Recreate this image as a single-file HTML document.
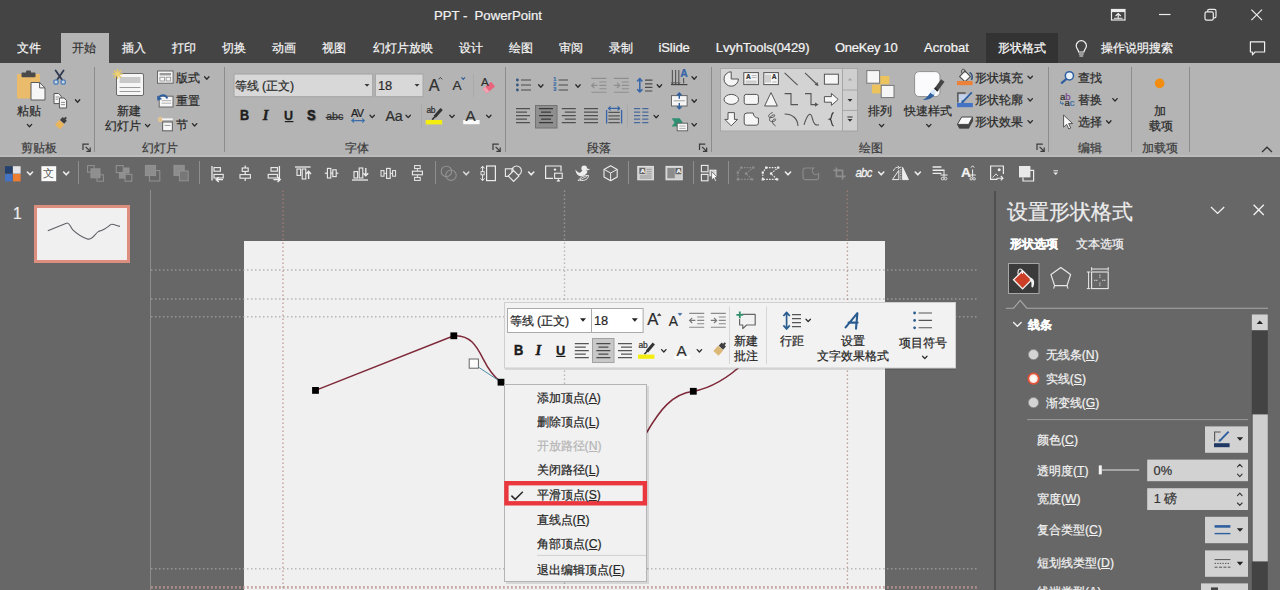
<!DOCTYPE html>
<html lang="zh"><head><meta charset="utf-8"><title>PPT - PowerPoint</title>
<style>
*{box-sizing:border-box;margin:0;padding:0}
html,body{width:1280px;height:590px;overflow:hidden;background:#676767;font-family:"Liberation Sans",sans-serif;font-size:12px;color:#262626}
.a{position:absolute}
.t{position:absolute;white-space:nowrap;line-height:1;-webkit-text-stroke:0.22px currentColor}
svg{position:absolute;left:0;top:0}
u{text-decoration:underline;text-underline-offset:1px}
</style></head>
<body>
<div class="a " style="left:0px;top:0px;width:1280px;height:62.5px;background:#444"></div>
<div class="a " style="left:60.8px;top:33px;width:48.7px;height:30px;background:#b4b4b4"></div>
<div class="a " style="left:986px;top:33px;width:72.4px;height:29.5px;background:#333"></div>
<div class="a " style="left:0px;top:62.5px;width:1280px;height:94.2px;background:#b4b4b4"></div>
<div class="a " style="left:0px;top:154.8px;width:1280px;height:1.9px;background:#bcbcbc"></div>
<div class="a " style="left:94px;top:67px;width:1px;height:85px;background:#8c8c8c"></div>
<div class="a " style="left:224px;top:67px;width:1px;height:85px;background:#8c8c8c"></div>
<div class="a " style="left:504.5px;top:67px;width:1px;height:85px;background:#8c8c8c"></div>
<div class="a " style="left:711px;top:67px;width:1px;height:85px;background:#8c8c8c"></div>
<div class="a " style="left:1048px;top:67px;width:1px;height:85px;background:#8c8c8c"></div>
<div class="a " style="left:1131px;top:67px;width:1px;height:85px;background:#8c8c8c"></div>
<div class="a " style="left:1188.5px;top:67px;width:1px;height:85px;background:#8c8c8c"></div>
<div class="a " style="left:472.5px;top:74px;width:1px;height:23px;background:#a9a9a9"></div>
<div class="a " style="left:420.6px;top:105px;width:1px;height:22px;background:#a9a9a9"></div>
<div class="a " style="left:627px;top:105px;width:1px;height:22px;background:#a9a9a9"></div>
<div class="a " style="left:0px;top:156.7px;width:1280px;height:33.3px;background:#676767"></div>
<div class="a " style="left:77.5px;top:161px;width:1px;height:23px;background:#8e8e8e"></div>
<div class="a " style="left:198.5px;top:161px;width:1px;height:23px;background:#8e8e8e"></div>
<div class="a " style="left:435px;top:161px;width:1px;height:23px;background:#8e8e8e"></div>
<div class="a " style="left:628px;top:161px;width:1px;height:23px;background:#8e8e8e"></div>
<div class="a " style="left:692.5px;top:161px;width:1px;height:23px;background:#8e8e8e"></div>
<div class="a " style="left:727.5px;top:161px;width:1px;height:23px;background:#8e8e8e"></div>
<div class="a " style="left:0px;top:190px;width:1280px;height:400px;background:#676767"></div>
<div class="a " style="left:33.8px;top:205.2px;width:96.6px;height:58.2px;background:#dc8f7f"></div>
<div class="a " style="left:36.8px;top:208.2px;width:90.6px;height:52.2px;background:#f6ecea"></div>
<div class="a " style="left:37.8px;top:209.2px;width:88.6px;height:50.2px;background:#f0f0f0"></div>
<div class="a " style="left:149.5px;top:190px;width:1px;height:400px;background:#8d8d8d"></div>
<div class="a " style="left:244.3px;top:240.8px;width:640.5px;height:349.2px;background:#f0f0f0"></div>
<div class="a " style="left:994.4px;top:191px;width:1.2px;height:399px;background:#4f4f4f"></div>
<svg width="1280" height="590" viewBox="0 0 1280 590">
<rect x="1111.5" y="9.5" width="13.5" height="10.5" fill="none" stroke="#ececec" stroke-width="1.2" />
<rect x="1111.5" y="9.5" width="13.5" height="2.6" fill="#ececec" stroke="none" stroke-width="1" />
<path d="M1118.2,18.4 V13.8 M1115.6,16 L1118.2,13.6 L1120.8,16" fill="none" stroke="#ececec" stroke-width="1.2" />
<line x1="1114" y1="18.3" x2="1122.5" y2="18.3" stroke="#ececec" stroke-width="1" />
<line x1="1159" y1="14.5" x2="1170.5" y2="14.5" stroke="#ececec" stroke-width="1.2" />
<rect x="1205" y="11.8" width="8.3" height="8.3" fill="none" stroke="#ececec" stroke-width="1.2" rx="1.6" />
<path d="M1207.6,11.6 V11 a1.6,1.6 0 0 1 1.6,-1.6 h5.2 a1.6,1.6 0 0 1 1.6,1.6 v5.2 a1.6,1.6 0 0 1 -1.6,1.6 h-0.9" fill="none" stroke="#ececec" stroke-width="1.2" />
<path d="M1251.4,9.6 L1262,20.2 M1262,9.6 L1251.4,20.2" fill="none" stroke="#ececec" stroke-width="1.2" />
<path d="M1078.6,52 C1078.6,49.6 1076.2,48.6 1076.2,45.8 a5.1,5.1 0 0 1 10.2,0 C1086.4,48.6 1084,49.6 1084,52 Z" fill="none" stroke="#f0f0f0" stroke-width="1.2" />
<path d="M1078.8,54 H1083.8 M1079.4,56 H1083.2" fill="none" stroke="#f0f0f0" stroke-width="1.1" />
<path d="M1250.4,41.8 H1264.6 V52 H1255 L1252.4,54.8 V52 H1250.4 Z" fill="none" stroke="#f0f0f0" stroke-width="1.2" stroke-linejoin="round"/>
<path d="M83,150.0 V144.2 H88.8" fill="none" stroke="#3a3a3a" stroke-width="1.2" />
<path d="M85.6,146.79999999999998 L90,151.2 M90.2,147.6 V151.39999999999998 H86.4" fill="none" stroke="#3a3a3a" stroke-width="1.2" />
<path d="M493,150.0 V144.2 H498.8" fill="none" stroke="#3a3a3a" stroke-width="1.2" />
<path d="M495.6,146.79999999999998 L500,151.2 M500.2,147.6 V151.39999999999998 H496.4" fill="none" stroke="#3a3a3a" stroke-width="1.2" />
<path d="M699.5,150.0 V144.2 H705.3" fill="none" stroke="#3a3a3a" stroke-width="1.2" />
<path d="M702.1,146.79999999999998 L706.5,151.2 M706.7,147.6 V151.39999999999998 H702.9" fill="none" stroke="#3a3a3a" stroke-width="1.2" />
<path d="M1037,150.0 V144.2 H1042.8" fill="none" stroke="#3a3a3a" stroke-width="1.2" />
<path d="M1039.6,146.79999999999998 L1044,151.2 M1044.2,147.6 V151.39999999999998 H1040.4" fill="none" stroke="#3a3a3a" stroke-width="1.2" />
<path d="M1262,152 L1267,147.2 L1272,152" fill="none" stroke="#333" stroke-width="1.3" />
<rect x="17" y="74" width="23" height="24.5" fill="#e9bb6a" stroke="none" stroke-width="1" rx="1" />
<rect x="21.5" y="72.6" width="14" height="4.6" fill="#4a4a4a" stroke="none" stroke-width="1" rx="0.8" />
<rect x="26" y="70.4" width="5" height="3.4" fill="#4a4a4a" stroke="none" stroke-width="1" rx="1" />
<path d="M31,82.5 H39.6 L45,87.9 V100 H31 Z" fill="#f6f6f6" stroke="#5a5a5a" stroke-width="1" />
<path d="M39.6,82.5 V87.9 H45" fill="none" stroke="#5a5a5a" stroke-width="1" />
<path d="M27.3,124.39999999999999 L29.5,126.8 L31.7,124.39999999999999" fill="none" stroke="#2b2b2b" stroke-width="1.3" stroke-linecap="round" stroke-linejoin="round"/>
<path d="M55.6,70.4 L62.4,80.2 M63.6,70.4 L56.8,80.2" fill="none" stroke="#2f3a50" stroke-width="1.8" stroke-linecap="round"/>
<circle cx="56" cy="82" r="2.2" fill="#c9d6e6" stroke="#4f7fb8" stroke-width="1.3"/>
<circle cx="63.2" cy="82" r="2.2" fill="#c9d6e6" stroke="#4f7fb8" stroke-width="1.3"/>
<path d="M54,93.5 H58.6 L61.2,96.1 V103.6 H54 Z" fill="#f6f6f6" stroke="#555" stroke-width="1" />
<path d="M59.4,98 H64 L66.6,100.6 V108 H59.4 Z" fill="#f6f6f6" stroke="#555" stroke-width="1" />
<path d="M55.6,97H59.4M55.6,99.2H58M61,102.4H65M61,104.6H65" fill="none" stroke="#777" stroke-width="0.8" />
<path d="M75.39999999999999,99.8 L77.6,102.2 L79.8,99.8" fill="none" stroke="#2b2b2b" stroke-width="1.3" stroke-linecap="round" stroke-linejoin="round"/>
<g transform="rotate(42 60.6 123.6)"><rect x="57.8" y="117.4" width="5.6" height="4" fill="#3f3f3f"/><rect x="59.6" y="115.2" width="2" height="2.6" fill="#3f3f3f"/><rect x="57.2" y="121.8" width="6.8" height="6.4" fill="#ebb55c"/></g>
<rect x="116.5" y="73.5" width="27" height="22" fill="#f6f6f6" stroke="#6a6a6a" stroke-width="1" rx="1.5" />
<rect x="119.6" y="77" width="20.8" height="6" fill="#c9c9c9" stroke="none" stroke-width="1" />
<path d="M119.6,87.5H140.4M119.6,91.5H140.4" fill="none" stroke="#9a9a9a" stroke-width="1" />
<g stroke="#e9c766" stroke-width="1.4" stroke-linecap="round"><path d="M117.6,69.4V78.6M113,74H122.2M114.4,70.8L120.8,77.2M120.8,70.8L114.4,77.2"/></g>
<circle cx="117.6" cy="74" r="2.4" fill="#ecd074" stroke="none" stroke-width="1"/>
<path d="M145.4,124.39999999999999 L147.6,126.8 L149.79999999999998,124.39999999999999" fill="none" stroke="#2b2b2b" stroke-width="1.3" stroke-linecap="round" stroke-linejoin="round"/>
<rect x="157.5" y="71" width="15.6" height="12.2" fill="#f6f6f6" stroke="#666" stroke-width="1" />
<rect x="159.6" y="73" width="11.4" height="2.4" fill="#9a9a9a" stroke="none" stroke-width="1" />
<rect x="159.9" y="77.2" width="4.6" height="3.8" fill="none" stroke="#8a8a8a" stroke-width="0.8" />
<rect x="166.1" y="77.2" width="4.6" height="3.8" fill="none" stroke="#8a8a8a" stroke-width="0.8" />
<path d="M204.60000000000002,76.8 L206.8,79.2 L209.0,76.8" fill="none" stroke="#2b2b2b" stroke-width="1.3" stroke-linecap="round" stroke-linejoin="round"/>
<rect x="159.2" y="96.2" width="13.8" height="10.8" fill="#f6f6f6" stroke="#666" stroke-width="1" />
<path d="M161.6,100.6H171M161.6,103.2H171" fill="none" stroke="#aaa" stroke-width="0.9" />
<path d="M167.2,98.6 A4.5,4.5 0 0 0 159,97.4" fill="none" stroke="#2f5f9e" stroke-width="1.9" />
<path d="M157,95.4 L157.4,100.8 L162.2,99 Z" fill="#2f5f9e" stroke="none" stroke-width="1" />
<circle cx="160.4" cy="119.4" r="2.6" fill="#f0c88a" stroke="none" stroke-width="1" opacity="0.75"/>
<rect x="162.6" y="122" width="9.8" height="8.8" fill="#f6f6f6" stroke="#666" stroke-width="1.1" />
<path d="M162,119.2H172.8" fill="none" stroke="#f4f4f4" stroke-width="1.7" />
<path d="M164.6,125.4H170.4" fill="none" stroke="#999" stroke-width="1" />
<path d="M192.4,123.6 L194.6,126.0 L196.79999999999998,123.6" fill="none" stroke="#2b2b2b" stroke-width="1.3" stroke-linecap="round" stroke-linejoin="round"/>
<rect x="234" y="74" width="138.7" height="22.7" fill="#d8d8d8" stroke="#a8a8a8" stroke-width="1.2" />
<rect x="375.4" y="74" width="47.7" height="22.7" fill="#d8d8d8" stroke="#a8a8a8" stroke-width="1.2" />
<path d="M364.5,84.0 h5 L367,86.80000000000001 z" fill="#3a3a3a" stroke="none" stroke-width="1" />
<path d="M414.5,84.0 h5 L417,86.80000000000001 z" fill="#3a3a3a" stroke="none" stroke-width="1" />
<path d="M438.6,79.4 L440.4,77.4 L442.2,79.4" fill="none" stroke="#444" stroke-width="1" />
<path d="M461.4,77.4 L463.2,79.4 L465,77.4" fill="none" stroke="#2f5f9e" stroke-width="1.1" />
<g transform="rotate(-40 489 87.6)"><rect x="483.4" y="84.6" width="11" height="6" rx="0.8" fill="#e9637c"/><rect x="483.4" y="84.6" width="3.4" height="6" fill="#f2a2b0"/></g>
<line x1="284.8" y1="121.6" x2="293.4" y2="121.6" stroke="#1e1e1e" stroke-width="1.2" />
<line x1="325.6" y1="117.4" x2="343.4" y2="117.4" stroke="#2e2e2e" stroke-width="1" />
<path d="M352,120.6H364.2M354,118.6L351.8,120.6L354,122.6M362.2,118.6L364.4,120.6L362.2,122.6" fill="none" stroke="#3b6ea8" stroke-width="1.1" />
<path d="M370.0,115.2 L372.2,117.60000000000001 L374.4,115.2" fill="none" stroke="#2b2b2b" stroke-width="1.3" stroke-linecap="round" stroke-linejoin="round"/>
<path d="M406.0,115.2 L408.2,117.60000000000001 L410.4,115.2" fill="none" stroke="#2b2b2b" stroke-width="1.3" stroke-linecap="round" stroke-linejoin="round"/>
<path d="M441.6,109 L434.8,116.8" fill="none" stroke="#333" stroke-width="3" />
<path d="M435.4,116.2 L432.2,119.6" fill="none" stroke="#333" stroke-width="1.6" />
<rect x="425.7" y="120" width="16.5" height="4.4" fill="#f4ee10" stroke="none" stroke-width="1" />
<path d="M449.8,115.2 L452,117.60000000000001 L454.2,115.2" fill="none" stroke="#2b2b2b" stroke-width="1.3" stroke-linecap="round" stroke-linejoin="round"/>
<rect x="463.2" y="120" width="16.4" height="4.2" fill="#fbfbfb" stroke="none" stroke-width="1" />
<path d="M486.6,115.2 L488.8,117.60000000000001 L491.0,115.2" fill="none" stroke="#2b2b2b" stroke-width="1.3" stroke-linecap="round" stroke-linejoin="round"/>
<circle cx="517.4" cy="80" r="1.4" fill="#34567f" stroke="none" stroke-width="1"/>
<circle cx="517.4" cy="85" r="1.4" fill="#34567f" stroke="none" stroke-width="1"/>
<circle cx="517.4" cy="90" r="1.4" fill="#34567f" stroke="none" stroke-width="1"/>
<path d="M521,80H531M521,85H531M521,90H531" fill="none" stroke="#4a4a4a" stroke-width="1.2" />
<path d="M538.5999999999999,84.8 L540.8,87.2 L543.0,84.8" fill="none" stroke="#2b2b2b" stroke-width="1.3" stroke-linecap="round" stroke-linejoin="round"/>
<path d="M558.6,80H568M558.6,85H568M558.6,90H568" fill="none" stroke="#4a4a4a" stroke-width="1.2" />
<path d="M575.8,84.8 L578,87.2 L580.2,84.8" fill="none" stroke="#2b2b2b" stroke-width="1.3" stroke-linecap="round" stroke-linejoin="round"/>
<path d="M591.4,78.4H606.4M599.4,82H606.4M599.4,85.4H606.4M599.4,88.8H606.4M591.4,92.2H606.4" fill="none" stroke="#8e8e8e" stroke-width="1.1" />
<path d="M597.4,85.4H591.6M594.2,82.8L591.6,85.4L594.2,88" fill="none" stroke="#8e8e8e" stroke-width="1.2" />
<path d="M613.8,78.4H628.8M621.8,82H628.8M621.8,85.4H628.8M621.8,88.8H628.8M613.8,92.2H628.8" fill="none" stroke="#8e8e8e" stroke-width="1.1" />
<path d="M613.8,85.4H619.6M617,82.8L619.6,85.4L617,88" fill="none" stroke="#8e8e8e" stroke-width="1.2" />
<path d="M639.8,79V91.6M637.2,81.4L639.8,78.6L642.4,81.4M637.2,89.2L639.8,92L642.4,89.2" fill="none" stroke="#3565a8" stroke-width="1.5" stroke-linejoin="round"/>
<path d="M645,80.2H652.4M645,83.8H652.4M645,87.4H652.4M645,91H652.4" fill="none" stroke="#4a4a4a" stroke-width="1.2" />
<path d="M657.1999999999999,84.8 L659.4,87.2 L661.6,84.8" fill="none" stroke="#2b2b2b" stroke-width="1.3" stroke-linecap="round" stroke-linejoin="round"/>
<path d="M516,108.6H530M516,112.1H527M516,115.6H530M516,119.1H527M516,122.6H530" fill="none" stroke="#505050" stroke-width="1.1" />
<rect x="535.5" y="105.5" width="21.5" height="22.5" fill="#8f8f8f" stroke="#727272" stroke-width="1" />
<path d="M539,108.6H553M541,112.1H551M539,115.6H553M541,119.1H551M539,122.6H553" fill="none" stroke="#3a3a3a" stroke-width="1.2" />
<path d="M561.8,108.6H575.8M564.8,112.1H575.8M561.8,115.6H575.8M564.8,119.1H575.8M561.8,122.6H575.8" fill="none" stroke="#505050" stroke-width="1.1" />
<path d="M584,108.6H598M584,112.1H598M584,115.6H598M584,119.1H598M584,122.6H598" fill="none" stroke="#505050" stroke-width="1.1" />
<path d="M608.4,112.4H619.8M608.4,115.8H619.8M608.4,119.2H619.8M608.4,122.6H619.8" fill="none" stroke="#555" stroke-width="1.2" />
<path d="M606.6,110V123.4M621.6,110V123.4" fill="none" stroke="#3565a8" stroke-width="1.3" />
<path d="M608.6,108.4H619.6M610.6,106.4L608.4,108.4L610.6,110.4M617.6,106.4L619.8,108.4L617.6,110.4" fill="none" stroke="#3565a8" stroke-width="1.2" />
<path d="M634,108.6H640.2M634,112.1H640.2M634,115.6H640.2M634,119.1H640.2M634,122.6H640.2" fill="none" stroke="#4a6a9c" stroke-width="1.05" />
<path d="M642.2,108.6H648.4M642.2,112.1H648.4M642.2,115.6H648.4M642.2,119.1H648.4M642.2,122.6H648.4" fill="none" stroke="#4a6a9c" stroke-width="1.05" />
<path d="M654.0,115.39999999999999 L656.2,117.8 L658.4000000000001,115.39999999999999" fill="none" stroke="#2b2b2b" stroke-width="1.3" stroke-linecap="round" stroke-linejoin="round"/>
<path d="M672.4,70V83.4M675.6,70V83.4M678.8,70V83.4" fill="none" stroke="#555" stroke-width="1.1" />
<path d="M671,84.6H687.4" fill="none" stroke="#444" stroke-width="1.2" />
<path d="M671.2,82.4L672.4,84L673.6,82.4M674.4,82.4L675.6,84L676.8,82.4M677.6,82.4L678.8,84L680,82.4" fill="none" stroke="#444" stroke-width="0.9" />
<path d="M683.6,78V83.4" fill="none" stroke="#555" stroke-width="1.1" />
<path d="M692.0,76.8 L694.2,79.2 L696.4000000000001,76.8" fill="none" stroke="#2b2b2b" stroke-width="1.3" stroke-linecap="round" stroke-linejoin="round"/>
<rect x="671.5" y="95.6" width="15.6" height="10.4" fill="#f6f6f6" stroke="#666" stroke-width="1" />
<path d="M679.3,93.2V98.8M677,95.4L679.3,93L681.6,95.4M679.3,103V108.6M677,106.4L679.3,108.8L681.6,106.4" fill="none" stroke="#2f5f9e" stroke-width="1.4" stroke-linejoin="round"/>
<path d="M673.6,100.8H685" fill="none" stroke="#999" stroke-width="0.9" />
<path d="M692.0,99.8 L694.2,102.2 L696.4000000000001,99.8" fill="none" stroke="#2b2b2b" stroke-width="1.3" stroke-linecap="round" stroke-linejoin="round"/>
<path d="M671.6,118.2H679.6L682.8,122.4L679.6,126.6H671.6L674.6,122.4Z" fill="#2f8f72" stroke="none" stroke-width="1" />
<rect x="677.2" y="123.2" width="10.4" height="7.6" fill="#f6f6f6" stroke="#666" stroke-width="1" />
<path d="M679.4,126H685.6M679.4,128.4H685.6" fill="none" stroke="#999" stroke-width="0.8" />
<path d="M692.0,123.6 L694.2,126.0 L696.4000000000001,123.6" fill="none" stroke="#2b2b2b" stroke-width="1.3" stroke-linecap="round" stroke-linejoin="round"/>
<rect x="720.5" y="68.5" width="137" height="62.5" fill="#d3d3d3" stroke="#a6a6a6" stroke-width="1" />
<rect x="842.5" y="68.5" width="15" height="62.5" fill="#cfcfcf" stroke="#a6a6a6" stroke-width="1" />
<path d="M842.5,90H857.5M842.5,110.4H857.5" fill="none" stroke="#a6a6a6" stroke-width="1" />
<path d="M847.6,80.6L850,78L852.4,80.6Z" fill="#a6a6a6" stroke="none" stroke-width="1" />
<path d="M847.5,99.0 h5 L850,101.80000000000001 z" fill="#333" stroke="none" stroke-width="1" />
<path d="M847.4,117H852.6" fill="none" stroke="#333" stroke-width="1" />
<path d="M847.5,119.0 h5 L850,121.80000000000001 z" fill="#333" stroke="none" stroke-width="1" />
<path d="M731.2,79V71.8A7.2,7.2 0 1 0 738.4,79Z" fill="#f6f6f6" stroke="#555" stroke-width="1" />
<rect x="743.8" y="72.6" width="14.6" height="12" fill="#f6f6f6" stroke="#555" stroke-width="1" />
<path d="M745.6,81.2H756.6M745.6,83H756.6M751.6,75.6H756.6M751.6,77.6H756.6" fill="none" stroke="#9a9a9a" stroke-width="0.7" />
<rect x="763.8" y="72.6" width="14.6" height="12" fill="#f6f6f6" stroke="#555" stroke-width="1" />
<path d="M766,74.6V82.6M768,74.6V82.6M770,74.6V82.6" fill="none" stroke="#8a8a8a" stroke-width="0.7" />
<path d="M772.4,82H776.6" fill="none" stroke="#9a9a9a" stroke-width="0.7" />
<path d="M784.6,72.8L797.6,85.2" fill="none" stroke="#555" stroke-width="1.1" />
<path d="M805,72.8L817.6,85" fill="none" stroke="#555" stroke-width="1.1" />
<path d="M818.6,86L814.6,84.8L817.4,82Z" fill="#555" stroke="none" stroke-width="1" />
<rect x="824.4" y="74.2" width="14" height="10" fill="#f6f6f6" stroke="#555" stroke-width="1" />
<ellipse cx="731.3" cy="99.4" rx="7.2" ry="5" fill="#f6f6f6" stroke="#555"/>
<rect x="744.2" y="94.4" width="14.2" height="10" fill="#f6f6f6" stroke="#555" stroke-width="1" rx="2" />
<path d="M771,92.6L777.4,106H764.6Z" fill="#f6f6f6" stroke="#555" stroke-width="1" stroke-linejoin="round"/>
<path d="M784.6,93.6H791V104.6H798" fill="none" stroke="#555" stroke-width="1.1" />
<path d="M805,93.6H811V104.6H816.4" fill="none" stroke="#555" stroke-width="1.1" />
<path d="M818.6,104.6L815,102.4V106.8Z" fill="#555" stroke="none" stroke-width="1" />
<path d="M824.4,96.6H831.4V93.4L838.2,99.4L831.4,105.4V102.2H824.4Z" fill="#f6f6f6" stroke="#555" stroke-width="1" stroke-linejoin="round"/>
<path d="M728,112.6H734.4V119.4H737.6L731.2,125.8L724.8,119.4H728Z" fill="#f6f6f6" stroke="#555" stroke-width="1" stroke-linejoin="round"/>
<path d="M747,113H753.2A5,5 0 0 0 758.4,118V123A2.2,2.2 0 0 1 756.2,125.2H746.4A2.2,2.2 0 0 1 744.2,123V115.8A2.8,2.8 0 0 1 747,113Z" fill="#f6f6f6" stroke="#555" stroke-width="1" />
<path d="M772.6,112.4C768,114.4 767.4,117.4 770.6,117.6C774.6,117.8 776,114.6 773.6,114.8C770,115.4 767.6,121 771.4,121.6C775.4,122 777,118.8 774.6,119C771.6,119.6 771.6,123.6 775.6,126" fill="none" stroke="#555" stroke-width="1" />
<path d="M784.6,114C792.6,114 797.6,118.6 798,126" fill="none" stroke="#555" stroke-width="1.1" />
<path d="M804,124.8C808,112 811,112 812.4,118.6C813.8,124.6 815.8,125.6 819,124.8" fill="none" stroke="#555" stroke-width="1.1" />
<path d="M833.6,112.6C830.8,112.6 832.6,118.4 829.8,119.2C832.6,120 830.8,125.8 833.6,125.8" fill="none" stroke="#333" stroke-width="1.2" />
<rect x="880.2" y="76" width="9.2" height="8.2" fill="#ecc35c" stroke="none" stroke-width="1" />
<rect x="872" y="84.6" width="9" height="8.8" fill="#ecc35c" stroke="none" stroke-width="1" />
<rect x="866.8" y="70.6" width="12.8" height="12.6" fill="#f6f6f6" stroke="#777" stroke-width="1" />
<rect x="881.2" y="85.4" width="12.8" height="12.2" fill="#f6f6f6" stroke="#777" stroke-width="1" />
<path d="M879.4,124.39999999999999 L881.6,126.8 L883.8000000000001,124.39999999999999" fill="none" stroke="#2b2b2b" stroke-width="1.3" stroke-linecap="round" stroke-linejoin="round"/>
<rect x="914.6" y="71.6" width="25.4" height="25" fill="#fbfbfd" stroke="#8f8f8f" stroke-width="1" rx="4.6" />
<path d="M942.8,80.6L936.6,89" fill="none" stroke="#454545" stroke-width="4.2" />
<path d="M936.9,88.6L935.6,90.4" fill="none" stroke="#2a2a2a" stroke-width="4.4" />
<circle cx="933.2" cy="92.2" r="2.7" fill="#d3e6f8" stroke="#f4f8fc" stroke-width="0.8"/>
<path d="M934.8,94.6C932.4,98.8 927.6,100.4 922.6,99.8C926.2,98.6 927.6,95.8 930.6,92.4C931.4,94 933,94.8 934.8,94.6Z" fill="#2f5f9e" stroke="none" stroke-width="1" />
<path d="M926.5999999999999,124.39999999999999 L928.8,126.8 L931.0,124.39999999999999" fill="none" stroke="#2b2b2b" stroke-width="1.3" stroke-linecap="round" stroke-linejoin="round"/>
<g transform="rotate(45 965 76.4)"><rect x="961.2" y="72.6" width="7.6" height="7.6" fill="#fafafa" stroke="#444"/></g>
<path d="M961.8,73.4C960.8,70.6 962.2,68.6 964,69.4C965.2,70 965.2,71.6 965,72.6" fill="none" stroke="#444" stroke-width="1" />
<path d="M969.6,72.4C972.4,74.2 972.8,77.4 971.4,80" fill="none" stroke="#34567f" stroke-width="1.7" />
<rect x="957" y="81" width="15.6" height="4.2" fill="#ec8238" stroke="none" stroke-width="1" />
<path d="M1028.0,76.2 L1030.2,78.60000000000001 L1032.4,76.2" fill="none" stroke="#2b2b2b" stroke-width="1.3" stroke-linecap="round" stroke-linejoin="round"/>
<path d="M959,102.4V94.4H971.6L962.6,102.4Z" fill="#c3d2ec" stroke="none" stroke-width="1" />
<path d="M965.6,93H957.8V102.6" fill="none" stroke="#555" stroke-width="1.4" />
<path d="M971.8,92.4L963,101.6" fill="none" stroke="#2f5f9e" stroke-width="1.9" />
<path d="M962,99.8L961,103.2L964.4,102.4Z" fill="#2f5f9e" stroke="none" stroke-width="1" />
<rect x="957" y="103" width="15.8" height="4.2" fill="#4472c4" stroke="none" stroke-width="1" />
<path d="M1028.0,98.6 L1030.2,101.0 L1032.4,98.6" fill="none" stroke="#2b2b2b" stroke-width="1.3" stroke-linecap="round" stroke-linejoin="round"/>
<path d="M957.4,124.4H968.6V128.2H959.4Z" fill="#444" stroke="#444" stroke-width="0.8" stroke-linejoin="round"/>
<path d="M968.6,124.4L972.6,117.4V121L968.6,128.2Z" fill="#444" stroke="#444" stroke-width="0.8" stroke-linejoin="round"/>
<path d="M961.6,117H972.6L968.6,124.4H957.4Z" fill="#fafafa" stroke="#444" stroke-width="1" stroke-linejoin="round"/>
<path d="M1028.0,120.6 L1030.2,123.0 L1032.4,120.6" fill="none" stroke="#2b2b2b" stroke-width="1.3" stroke-linecap="round" stroke-linejoin="round"/>
<circle cx="1069.4" cy="75.8" r="4.1" fill="#e9f1fb" stroke="#2f5f9e" stroke-width="1.5"/>
<path d="M1066.2,79.2L1061.8,82.8" fill="none" stroke="#2f5f9e" stroke-width="2.2" stroke-linecap="round"/>
<path d="M1060.6,101V103.6H1063.4M1062.2,102.4L1063.6,103.6L1062.2,104.8" fill="none" stroke="#3b6ea8" stroke-width="0.9" />
<path d="M1112.8,98.6 L1115,101.0 L1117.2,98.6" fill="none" stroke="#2b2b2b" stroke-width="1.3" stroke-linecap="round" stroke-linejoin="round"/>
<path d="M1063.6,115V127.2L1066.6,124.4L1068.8,129L1070.8,128L1068.6,123.6H1072.6Z" fill="#fafafa" stroke="#555" stroke-width="1" stroke-linejoin="round"/>
<path d="M1106.6,120.8 L1108.8,123.2 L1111.0,120.8" fill="none" stroke="#2b2b2b" stroke-width="1.3" stroke-linecap="round" stroke-linejoin="round"/>
<circle cx="1159.6" cy="83.4" r="4.8" fill="#f28d10" stroke="none" stroke-width="1"/>
<rect x="5" y="166.2" width="7.4" height="7.4" fill="#24406e" stroke="none" stroke-width="1" />
<rect x="13" y="166.2" width="7.6" height="7.4" fill="#e4e4e8" stroke="none" stroke-width="1" />
<rect x="5" y="174" width="7.4" height="7.4" fill="#4472c4" stroke="none" stroke-width="1" />
<rect x="13" y="174" width="7.6" height="7.4" fill="#ed7d31" stroke="none" stroke-width="1" />
<path d="M27.4,172.0 L30,174.8 L32.6,172.0" fill="none" stroke="#ededed" stroke-width="1.6" stroke-linecap="round" stroke-linejoin="round"/>
<rect x="41.4" y="166.2" width="14.8" height="15" fill="#fafafa" stroke="none" stroke-width="1" />
<path d="M63.6,172.0 L66.2,174.8 L68.8,172.0" fill="none" stroke="#ededed" stroke-width="1.6" stroke-linecap="round" stroke-linejoin="round"/>
<rect x="87.6" y="165.6" width="6.6" height="6.6" fill="none" stroke="#939393" stroke-width="1" />
<rect x="97" y="174.8" width="6.4" height="6.4" fill="none" stroke="#939393" stroke-width="1" />
<rect x="91" y="168.8" width="9" height="9" fill="#8f8f8f" stroke="#939393" stroke-width="1" />
<rect x="116.2" y="165.6" width="7" height="7" fill="none" stroke="#939393" stroke-width="1" />
<rect x="125" y="174.4" width="6.8" height="6.8" fill="none" stroke="#939393" stroke-width="1" />
<rect x="124" y="168" width="5" height="5" fill="#8f8f8f" stroke="#939393" stroke-width="1" />
<rect x="119.4" y="172.6" width="5.4" height="5.4" fill="#8f8f8f" stroke="#939393" stroke-width="1" />
<rect x="149.4" y="170.6" width="10.4" height="10.4" fill="none" stroke="#939393" stroke-width="1" />
<rect x="145.4" y="165.4" width="10.2" height="10.2" fill="#8d8d8d" stroke="#939393" stroke-width="1" />
<rect x="174" y="165.4" width="10.2" height="10.2" fill="#8d8d8d" stroke="#939393" stroke-width="1" />
<rect x="179.4" y="171" width="8.8" height="9.8" fill="#777" stroke="#939393" stroke-width="1" />
<path d="M212,166V180.6" fill="none" stroke="#ededed" stroke-width="1.3" />
<rect x="214" y="167.6" width="6.4" height="3.6" fill="none" stroke="#ededed" stroke-width="1.1" />
<rect x="214" y="174.4" width="9.2" height="3.6" fill="none" stroke="#ededed" stroke-width="1.1" />
<path d="M223,179.6H216.4M218.8,177.2L216.2,179.6L218.8,182" fill="none" stroke="#ededed" stroke-width="1.4" />
<path d="M245.2,165.6V181" fill="none" stroke="#ededed" stroke-width="1.2" />
<rect x="242.2" y="168" width="6" height="3.4" fill="#676767" stroke="#ededed" stroke-width="1.1" />
<rect x="240" y="174.6" width="10.4" height="3.6" fill="#676767" stroke="#ededed" stroke-width="1.1" />
<path d="M279.4,166V180.6" fill="none" stroke="#ededed" stroke-width="1.3" />
<rect x="271" y="167.6" width="6.4" height="3.6" fill="none" stroke="#ededed" stroke-width="1.1" />
<rect x="268.2" y="174.4" width="9.2" height="3.6" fill="none" stroke="#ededed" stroke-width="1.1" />
<path d="M273.4,179.6H280M277.6,177.2L280.2,179.6L277.6,182" fill="none" stroke="#ededed" stroke-width="1.4" />
<path d="M295,167H310.6" fill="none" stroke="#ededed" stroke-width="1.3" />
<rect x="297" y="169" width="3.6" height="6.4" fill="none" stroke="#ededed" stroke-width="1.1" />
<rect x="302.2" y="169" width="3.6" height="10" fill="none" stroke="#ededed" stroke-width="1.1" />
<path d="M308.6,179V171.6M306.2,174L308.6,171.4L311,174" fill="none" stroke="#ededed" stroke-width="1.4" />
<path d="M324.8,173.2H338.4" fill="none" stroke="#ededed" stroke-width="1.2" />
<rect x="327.4" y="168.4" width="3.4" height="9.6" fill="#676767" stroke="#ededed" stroke-width="1.1" />
<rect x="332.8" y="169.8" width="3.4" height="6.8" fill="#676767" stroke="#ededed" stroke-width="1.1" />
<path d="M352,180H368" fill="none" stroke="#ededed" stroke-width="1.3" />
<rect x="354" y="171.6" width="3.6" height="6.4" fill="none" stroke="#ededed" stroke-width="1.1" />
<rect x="359.2" y="168" width="3.6" height="10" fill="none" stroke="#ededed" stroke-width="1.1" />
<path d="M365.8,168V175.6M363.4,173.2L365.8,175.8L368.2,173.2" fill="none" stroke="#ededed" stroke-width="1.4" />
<rect x="381" y="170.6" width="3" height="5.6" fill="none" stroke="#ededed" stroke-width="1" />
<rect x="386.6" y="168.4" width="3.6" height="10" fill="none" stroke="#ededed" stroke-width="1.1" />
<rect x="392.6" y="170.6" width="3" height="5.6" fill="none" stroke="#ededed" stroke-width="1" />
<path d="M384,173.4H386.6M390.2,173.4H392.6" fill="none" stroke="#ededed" stroke-width="0.9" />
<rect x="414.6" y="165.6" width="5.6" height="3" fill="none" stroke="#ededed" stroke-width="1" />
<rect x="412.4" y="171.2" width="10" height="3.6" fill="none" stroke="#ededed" stroke-width="1.1" />
<rect x="414.6" y="177.4" width="5.6" height="3" fill="none" stroke="#ededed" stroke-width="1" />
<path d="M417.4,168.6V171.2M417.4,174.8V177.4" fill="none" stroke="#ededed" stroke-width="0.9" />
<circle cx="446.4" cy="171.4" r="5.2" fill="none" stroke="#939393" stroke-width="1.1"/>
<circle cx="451" cy="175.2" r="5.2" fill="none" stroke="#939393" stroke-width="1.1"/>
<path d="M463.59999999999997,172.0 L466.2,174.8 L468.8,172.0" fill="none" stroke="#d8d8d8" stroke-width="1.6" stroke-linecap="round" stroke-linejoin="round"/>
<rect x="486.6" y="166" width="8.8" height="14.6" fill="none" stroke="#ededed" stroke-width="1.2" />
<path d="M482.6,166.4V180.4M480.6,168.4L482.6,166.2L484.6,168.4M480.6,178.4L482.6,180.6L484.6,178.4" fill="none" stroke="#ededed" stroke-width="1" />
<rect x="481" y="171.6" width="3.2" height="3.2" fill="#676767" stroke="#ededed" stroke-width="0.9" />
<rect x="505.4" y="168.8" width="7.6" height="7.6" fill="none" stroke="#ededed" stroke-width="1.1" />
<circle cx="516.6" cy="170.8" r="4.8" fill="none" stroke="#ededed" stroke-width="1.1"/>
<g transform="rotate(45 513.6 176)"><rect x="509.8" y="172.2" width="7.6" height="7.6" fill="#676767" stroke="#ededed" stroke-width="1.1"/></g>
<path d="M528.6,172.0 L531.2,174.8 L533.8000000000001,172.0" fill="none" stroke="#ededed" stroke-width="1.6" stroke-linecap="round" stroke-linejoin="round"/>
<path d="M553,178.4H545.6V166H561V171.6" fill="none" stroke="#ededed" stroke-width="1.2" />
<circle cx="555" cy="169.6" r="1.2" fill="#ededed" stroke="none" stroke-width="1"/>
<rect x="554.6" y="173.2" width="7.6" height="5.2" fill="none" stroke="#ededed" stroke-width="1.1" />
<path d="M556.4,181.4L558.4,178.8L560.4,181.4Z" fill="#ededed" stroke="none" stroke-width="1" />
<circle cx="584.2" cy="168.4" r="2.8" fill="#ededed" stroke="none" stroke-width="1"/>
<path d="M586.6,168.2L590.2,169.6L586.8,170.4Z" fill="#ededed" stroke="none" stroke-width="1" />
<path d="M575.4,169.6C576,175.6 580,177.6 584,175.6C587.6,173.6 588,171.2 586.4,170.6L581.8,171C580.4,174 577.6,172.8 575.4,169.6Z" fill="#ededed" stroke="none" stroke-width="1" />
<path d="M578,181C580.4,176.8 584.4,175.2 588.6,175.6C588.2,179 584.6,181.4 580,180.2" fill="none" stroke="#ededed" stroke-width="1" />
<path d="M578.6,180.6L586.8,176.4" fill="none" stroke="#ededed" stroke-width="0.8" />
<path d="M610.6,165.8L617.2,169.4V177L610.6,180.8L604,177V169.4Z" fill="none" stroke="#ededed" stroke-width="1.1" stroke-linejoin="round"/>
<path d="M604,169.4L610.6,173L617.2,169.4M610.6,173V180.8" fill="none" stroke="#ededed" stroke-width="1" />
<rect x="637.8" y="166.4" width="15.6" height="13.4" fill="#cdcdcd" stroke="#e4e4e4" stroke-width="1" />
<path d="M646.6,169.4H651.6M646.6,171.6H651.6M646.6,173.8H651.6M640,176H651.6M640,178H651.6" fill="none" stroke="#888" stroke-width="0.7" />
<rect x="639.4" y="167.8" width="5.8" height="6.2" fill="#666" stroke="none" stroke-width="1" />
<rect x="666" y="166.4" width="16.2" height="13.4" fill="#cdcdcd" stroke="#e4e4e4" stroke-width="1" />
<rect x="667.4" y="168" width="7.4" height="10.2" fill="#8c8c8c" stroke="none" stroke-width="1" />
<rect x="675.4" y="168" width="5.8" height="6.2" fill="#666" stroke="none" stroke-width="1" />
<rect x="701.4" y="165.4" width="6.6" height="6.4" fill="none" stroke="#ededed" stroke-width="1.1" />
<rect x="701.4" y="174.4" width="6.6" height="6.4" fill="none" stroke="#ededed" stroke-width="1.1" />
<rect x="710" y="170.2" width="6" height="5.6" fill="#cfcfcf" stroke="#ededed" stroke-width="1" />
<path d="M711.6,171.6V180.2L713.6,178.2L715.2,181.4L716.6,180.8L715,177.6H717.6Z" fill="#fafafa" stroke="#555" stroke-width="0.7" />
<path d="M741.2,167.6H753.2L746,173.6L752.2,179.4H737.8V172.6Z" fill="none" stroke="#8f8f8f" stroke-width="1.1" stroke-dasharray="1.6 1.2"/>
<rect x="740.1" y="166.5" width="2.2" height="2.2" fill="#8f8f8f" stroke="none" stroke-width="1" />
<rect x="752.1" y="166.5" width="2.2" height="2.2" fill="#8f8f8f" stroke="none" stroke-width="1" />
<rect x="736.6999999999999" y="171.5" width="2.2" height="2.2" fill="#8f8f8f" stroke="none" stroke-width="1" />
<rect x="736.6999999999999" y="178.3" width="2.2" height="2.2" fill="#8f8f8f" stroke="none" stroke-width="1" />
<rect x="751.1" y="178.3" width="2.2" height="2.2" fill="#8f8f8f" stroke="none" stroke-width="1" />
<rect x="744.9" y="172.5" width="2.2" height="2.2" fill="#8f8f8f" stroke="none" stroke-width="1" />
<path d="M766.2,167.6H778.2L771,173.6L777.2,179.4H762.8V172.6Z" fill="none" stroke="#ededed" stroke-width="1.1" stroke-dasharray="1.6 1.2"/>
<rect x="765.1" y="166.5" width="2.2" height="2.2" fill="#ededed" stroke="none" stroke-width="1" />
<rect x="777.1" y="166.5" width="2.2" height="2.2" fill="#ededed" stroke="none" stroke-width="1" />
<rect x="761.6999999999999" y="171.5" width="2.2" height="2.2" fill="#ededed" stroke="none" stroke-width="1" />
<rect x="761.6999999999999" y="178.3" width="2.2" height="2.2" fill="#ededed" stroke="none" stroke-width="1" />
<rect x="776.1" y="178.3" width="2.2" height="2.2" fill="#ededed" stroke="none" stroke-width="1" />
<rect x="769.9" y="172.5" width="2.2" height="2.2" fill="#ededed" stroke="none" stroke-width="1" />
<path d="M785.4,172.0 L788,174.8 L790.6,172.0" fill="none" stroke="#ededed" stroke-width="1.6" stroke-linecap="round" stroke-linejoin="round"/>
<path d="M805.4,179.6H816.6A2,2 0 0 0 818.6,177.6V173.6A3.6,3.6 0 0 1 813.6,168H805.4A2.4,2.4 0 0 0 803,170.4V177.2A2.4,2.4 0 0 0 805.4,179.6Z" fill="none" stroke="#8a8a8a" stroke-width="1.2" />
<path d="M836.4,167.4V176.4H845.6M833.4,170.4H842.6V179.6" fill="none" stroke="#8f8f8f" stroke-width="1.6" />
<path d="M878.6,172.0 L881.2,174.8 L883.8000000000001,172.0" fill="none" stroke="#ededed" stroke-width="1.6" stroke-linecap="round" stroke-linejoin="round"/>
<path d="M900.8,166.6V180" fill="none" stroke="#ededed" stroke-width="0.9" stroke-dasharray="1.4 1"/>
<path d="M898.8,170.4V179.6H892.4Z" fill="none" stroke="#ededed" stroke-width="1" />
<path d="M902.6,167.4V179.6H908.4Z" fill="#ededed" stroke="#ededed" stroke-width="1" />
<path d="M893.4,171C894.4,167.6 897.6,166.6 899.4,167.6M897.8,166L899.6,167.6L897.8,169.2" fill="none" stroke="#ededed" stroke-width="0.9" />
<path d="M915.1999999999999,172.0 L917.8,174.8 L920.4,172.0" fill="none" stroke="#ededed" stroke-width="1.6" stroke-linecap="round" stroke-linejoin="round"/>
<path d="M932.6,167H941.4M932.6,170.2H944.4M932.6,173.4H941.4" fill="none" stroke="#ededed" stroke-width="1.4" />
<path d="M944,170V177.4M940.4,175H947.6" fill="none" stroke="#ededed" stroke-width="1" />
<circle cx="942.6" cy="178.6" r="1.3" fill="none" stroke="#ededed" stroke-width="0.9"/>
<circle cx="945.6" cy="178.6" r="1.3" fill="none" stroke="#ededed" stroke-width="0.9"/>
<path d="M971,167.6L972.6,165.8L974.2,167.6" fill="none" stroke="#ededed" stroke-width="1" />
<path d="M972.6,169.4V177.4M969.4,175H975.8" fill="none" stroke="#ededed" stroke-width="1" />
<circle cx="971.2" cy="178.8" r="1.2" fill="none" stroke="#ededed" stroke-width="0.9"/>
<circle cx="974.2" cy="178.8" r="1.2" fill="none" stroke="#ededed" stroke-width="0.9"/>
<path d="M1003.4,174V166H990.6V179.4H997.6" fill="none" stroke="#ededed" stroke-width="1.2" />
<circle cx="999.2" cy="169.8" r="1.5" fill="#ededed" stroke="none" stroke-width="1"/>
<path d="M996.4,178.2H1002.8M1000.8,176L1003,178.2L1000.8,180.4" fill="none" stroke="#ededed" stroke-width="1.1" />
<path d="M992.6,177.6L996,173.8L998,176" fill="none" stroke="#ededed" stroke-width="0.9" />
<path d="M1023,177.4V181H1033.6V170.4H1030" fill="none" stroke="#ededed" stroke-width="1.2" />
<rect x="1019" y="166" width="11.4" height="11.4" fill="#e9e9e9" stroke="none" stroke-width="1" />
<path d="M1053.4,170.8H1058" fill="none" stroke="#ededed" stroke-width="1" />
<path d="M1053.4,172.5 h4.6 L1055.7,175.10000000000002 z" fill="#ededed" stroke="none" stroke-width="1" />
<path d="M47.8,230.8L66.4,223.2C69.4,222 70,226.4 72.6,229.6C76,233 82,237 87.4,239C92,240.4 94.6,234 98.6,231.4C102.6,230.4 106,228.6 110.6,224.6C112.6,223.4 116,225.6 120,226.4" fill="none" stroke="#5e5e66" stroke-width="1.1" />
<path d="M151,270H978.6" fill="none" stroke="#a6a6a6" stroke-width="1.4" stroke-dasharray="1.5 2.5" opacity="0.75"/>
<path d="M151,299H978.6" fill="none" stroke="#a6a6a6" stroke-width="1.4" stroke-dasharray="1.5 2.5" opacity="0.75"/>
<path d="M151,316.8H978.6" fill="none" stroke="#a6a6a6" stroke-width="1.4" stroke-dasharray="1.5 2.5" opacity="0.75"/>
<path d="M151,568.8H978.6" fill="none" stroke="#a6a6a6" stroke-width="1.4" stroke-dasharray="1.5 2.5" opacity="0.75"/>
<path d="M151,587.4H978.6" fill="none" stroke="#bb9a92" stroke-width="2.6" stroke-dasharray="1.8 2.2" opacity="0.8"/>
<path d="M283,190.5V590" fill="none" stroke="#b0847c" stroke-width="1.4" stroke-dasharray="1.5 2.5" opacity="0.72"/>
<path d="M847.4,190.5V590" fill="none" stroke="#b0847c" stroke-width="1.4" stroke-dasharray="1.5 2.5" opacity="0.72"/>
<path d="M564.5,190.5V590" fill="none" stroke="#a6a6a6" stroke-width="1.4" stroke-dasharray="1.5 2.5" opacity="0.75"/>
<path d="M315.5,390.4L453.8,335.8C470,334.6 476.6,346 483,358.6C488,368.6 493.6,376.6 501,382.2" fill="none" stroke="#7e2838" stroke-width="1.5" />
<path d="M501,382.2C540,412 575,478 610,470C630,464 640,444 647,432C660,410 672,394 693.3,391.3C712,388 728,378 745,362" fill="none" stroke="#7e2838" stroke-width="1.5" />
<path d="M477.6,366.6L500,381.4" fill="none" stroke="#4d8fa6" stroke-width="1" />
<rect x="469.2" y="359" width="9.2" height="9.2" fill="#fdfdfd" stroke="#666" stroke-width="1" />
<rect x="312.1" y="387.0" width="6.8" height="6.8" fill="#000" stroke="none" stroke-width="1" />
<rect x="450.40000000000003" y="332.40000000000003" width="6.8" height="6.8" fill="#000" stroke="none" stroke-width="1" />
<rect x="497.6" y="378.8" width="6.8" height="6.8" fill="#000" stroke="none" stroke-width="1" />
<rect x="689.9" y="387.90000000000003" width="6.8" height="6.8" fill="#000" stroke="none" stroke-width="1" />
<path d="M1211,207L1217.6,213.4L1224.2,207" fill="none" stroke="#f2f2f2" stroke-width="1.3" />
<path d="M1253.6,204.8L1263.8,215M1263.8,204.8L1253.6,215" fill="none" stroke="#f2f2f2" stroke-width="1.3" />
<rect x="1008.5" y="263.5" width="30.5" height="30" fill="#3b3b3b" stroke="#a6a6a6" stroke-width="1" />
<g transform="rotate(45 1022.6 279.8)"><rect x="1016.2" y="273.4" width="12.8" height="12.8" fill="#cc3f26" stroke="#f4f4f4" stroke-width="1.3"/></g>
<path d="M1018.6,275.4C1017,271.4 1018.6,268.4 1021,269.2C1022.6,269.8 1022.8,272 1022.4,274" fill="none" stroke="#f4f4f4" stroke-width="1.1" />
<path d="M1030.4,277.4C1033.8,278.4 1035,281.6 1033.6,286C1032.6,288.4 1031.4,287.6 1031.4,286C1031.6,283.4 1031.8,281 1029.6,279.4Z" fill="#f4f4f4" stroke="none" stroke-width="1" />
<path d="M1060.8,267.4L1070.6,274.6L1067,285.6H1054.6L1051,274.6Z" fill="none" stroke="#e9e9e9" stroke-width="1.2" stroke-linejoin="round"/>
<path d="M1054.6,285.6L1053.6,288.6M1067,285.6L1068,288.6" fill="none" stroke="#e9e9e9" stroke-width="1.1" />
<rect x="1091.6" y="272" width="16.6" height="16.6" fill="none" stroke="#e9e9e9" stroke-width="1.1" />
<path d="M1091.6,269H1108.2M1091.6,267.2V270.8M1108.2,267.2V270.8M1088.6,272V288.6M1086.8,272H1090.4M1086.8,288.6H1090.4" fill="none" stroke="#e9e9e9" stroke-width="1" />
<path d="M1099.9,274.6V278M1099.9,282.6V286M1094.2,280.3H1097.6M1102.2,280.3H1105.6" fill="none" stroke="#e9e9e9" stroke-width="1" stroke-dasharray="1.2 0.8"/>
<path d="M1006,308.2H1013.6L1020.2,300.4L1026.8,308.2H1268" fill="none" stroke="#a9a9a9" stroke-width="1.1" />
<path d="M1013.6,322.5 L1017.4,326.29999999999995 L1021.1999999999999,322.5" fill="none" stroke="#f2f2f2" stroke-width="1.3" stroke-linecap="round" stroke-linejoin="round"/>
<rect x="1251.8" y="314.4" width="16" height="275.6" fill="#434343" stroke="none" stroke-width="1" />
<rect x="1251.8" y="314.4" width="16" height="15.8" fill="#d2d2d2" stroke="none" stroke-width="1" />
<path d="M1256.6,324L1259.8,320.4L1263,324Z" fill="#222" stroke="none" stroke-width="1" />
<rect x="1252.6" y="414.4" width="15.2" height="147" fill="#cfcfcf" stroke="none" stroke-width="1" />
<circle cx="1033.5" cy="354.6" r="5.1" fill="#d4d4d4" stroke="#8c8c8c" stroke-width="1"/>
<circle cx="1033.5" cy="378.6" r="5.2" fill="#fbe9e4" stroke="#e25238" stroke-width="1.8"/>
<circle cx="1033.5" cy="378.6" r="2.6" fill="#fffdf6" stroke="none" stroke-width="1"/>
<circle cx="1033.5" cy="402.6" r="5.1" fill="#d4d4d4" stroke="#8c8c8c" stroke-width="1"/>
<path d="M1027,419.6H1248" fill="none" stroke="#9a9a9a" stroke-width="1" />
<rect x="1205" y="426.4" width="43" height="26.4" fill="#d2d2d2" stroke="none" stroke-width="1" />
<rect x="1214" y="443.2" width="15.6" height="4" fill="#1f3864" stroke="none" stroke-width="1" />
<path d="M1220.6,432H1214.6V441.6" fill="none" stroke="#555" stroke-width="1.1" />
<path d="M1228.6,431.6L1220,440.6" fill="none" stroke="#2f5f9e" stroke-width="2" />
<path d="M1219.2,439L1218.4,441.8L1221.2,441.2Z" fill="#2f5f9e" stroke="none" stroke-width="1" />
<path d="M1236.8,437.2 h6.4 L1240,440.8 z" fill="#222" stroke="none" stroke-width="1" />
<rect x="1098.8" y="465.4" width="3" height="9" fill="#f4f4f4" stroke="none" stroke-width="1" />
<path d="M1101.8,470H1139.2" fill="none" stroke="#e4e4e4" stroke-width="1.1" />
<rect x="1147.2" y="459.6" width="100.8" height="21.6" fill="#d2d2d2" stroke="none" stroke-width="1" />
<path d="M1237.5,466.8 L1239.8,464.40000000000003 L1242.1,466.8" fill="none" stroke="#333" stroke-width="1.1" stroke-linecap="round" stroke-linejoin="round"/>
<path d="M1237.5,474.2 L1239.8,476.59999999999997 L1242.1,474.2" fill="none" stroke="#333" stroke-width="1.1" stroke-linecap="round" stroke-linejoin="round"/>
<rect x="1147.2" y="488.2" width="100.8" height="21.8" fill="#d2d2d2" stroke="none" stroke-width="1" />
<path d="M1237.5,495.59999999999997 L1239.8,493.2 L1242.1,495.59999999999997" fill="none" stroke="#333" stroke-width="1.1" stroke-linecap="round" stroke-linejoin="round"/>
<path d="M1237.5,503.0 L1239.8,505.4 L1242.1,503.0" fill="none" stroke="#333" stroke-width="1.1" stroke-linecap="round" stroke-linejoin="round"/>
<rect x="1205" y="516.8" width="43" height="26.4" fill="#d2d2d2" stroke="none" stroke-width="1" />
<path d="M1214.6,526.4H1230.4" fill="none" stroke="#2f5f9e" stroke-width="2.6" />
<path d="M1214.6,533.6H1230.4" fill="none" stroke="#2f5f9e" stroke-width="1.4" />
<path d="M1236.8,528.2 h6.4 L1240,531.8 z" fill="#222" stroke="none" stroke-width="1" />
<rect x="1205" y="550.4" width="43" height="26.4" fill="#d2d2d2" stroke="none" stroke-width="1" />
<path d="M1214.6,559.6H1230.4" fill="none" stroke="#555" stroke-width="1" />
<path d="M1214.6,563.4H1230.4" fill="none" stroke="#555" stroke-width="1" stroke-dasharray="1.4 1.2"/>
<path d="M1214.6,567.2H1230.4" fill="none" stroke="#555" stroke-width="1" stroke-dasharray="3 1.4"/>
<path d="M1236.8,561.8000000000001 h6.4 L1240,565.4 z" fill="#222" stroke="none" stroke-width="1" />
<rect x="1201" y="583.4" width="47" height="8" fill="#d2d2d2" stroke="none" stroke-width="1" />
<rect x="1211" y="587.4" width="7" height="4" fill="#444" stroke="none" stroke-width="1" />
<rect x="505" y="304" width="451" height="66" fill="#000" opacity="0.10"/>
<rect x="504.5" y="302.5" width="451" height="65.5" fill="#f2f2f2" stroke="#cfcfcf" stroke-width="1" />
<rect x="507.5" y="308.5" width="84" height="24" fill="#ffffff" stroke="#ababab" stroke-width="1" />
<rect x="591.5" y="308.5" width="51.6" height="24" fill="#ffffff" stroke="#ababab" stroke-width="1" />
<path d="M580.0,318.3 h6 L583,321.7 z" fill="#222" stroke="none" stroke-width="1" />
<path d="M631.8,318.3 h6 L634.8,321.7 z" fill="#222" stroke="none" stroke-width="1" />
<path d="M657.4,315.6L659.2,313.6L661,315.6Z" fill="#333" stroke="#333" stroke-width="0.6" />
<path d="M678.2,313.4L680,315.4L681.8,313.4Z" fill="#2f5f9e" stroke="#2f5f9e" stroke-width="0.6" />
<path d="M689.2,313.4H704.2M697.2,317H704.2M697.2,320.4H704.2M697.2,323.8H704.2M689.2,327.2H704.2" fill="none" stroke="#8a8a8a" stroke-width="1.1" />
<path d="M695.4,320.4H689.6M692.2,317.8L689.6,320.4L692.2,323" fill="none" stroke="#777" stroke-width="1.2" />
<path d="M710.8,313.4H725.8M718.8,317H725.8M718.8,320.4H725.8M718.8,323.8H725.8M710.8,327.2H725.8" fill="none" stroke="#8a8a8a" stroke-width="1.1" />
<path d="M710.8,320.4H716.6M714,317.8L716.6,320.4L714,323" fill="none" stroke="#777" stroke-width="1.2" />
<line x1="556.2" y1="356.4" x2="565.4" y2="356.4" stroke="#1a1a1a" stroke-width="1.2" />
<path d="M574.8,343.6H588.8M574.8,347.1H585.8M574.8,350.6H588.8M574.8,354.1H585.8M574.8,357.6H588.8" fill="none" stroke="#555" stroke-width="1.1" />
<rect x="592.5" y="338.5" width="21.5" height="24" fill="#c8c8c8" stroke="#a2a2a2" stroke-width="1" />
<path d="M596.4,343.6H610.4M598.4,347.1H608.4M596.4,350.6H610.4M598.4,354.1H608.4M596.4,357.6H610.4" fill="none" stroke="#4a4a4a" stroke-width="1.1" />
<path d="M618,343.6H632M621,347.1H632M618,350.6H632M621,354.1H632M618,357.6H632" fill="none" stroke="#555" stroke-width="1.1" />
<path d="M653.8,343.6L647,351.4" fill="none" stroke="#333" stroke-width="3" />
<path d="M647.6,350.8L644.4,354.2" fill="none" stroke="#333" stroke-width="1.6" />
<rect x="638" y="354.6" width="16.4" height="4.2" fill="#f4ee10" stroke="none" stroke-width="1" />
<path d="M661.5999999999999,349.6 L663.8,352.0 L666.0,349.6" fill="none" stroke="#2b2b2b" stroke-width="1.3" stroke-linecap="round" stroke-linejoin="round"/>
<rect x="674.2" y="355" width="16" height="4.2" fill="#ffffff" stroke="none" stroke-width="1" />
<path d="M697.1999999999999,349.6 L699.4,352.0 L701.6,349.6" fill="none" stroke="#2b2b2b" stroke-width="1.3" stroke-linecap="round" stroke-linejoin="round"/>
<g transform="rotate(42 718.4 350.4)"><rect x="715.6" y="342.4" width="5.8" height="4.4" fill="#3f3f3f"/><rect x="717.5" y="340.2" width="2" height="2.6" fill="#3f3f3f"/><rect x="715" y="347.2" width="7" height="7" fill="#dcb877"/></g>
<path d="M729.5,306.5V364M766.5,306.5V364" fill="none" stroke="#d6d6d6" stroke-width="1" />
<path d="M741.6,314.4H755.2V325H746.6L742.8,328.6V325H739.6V319" fill="none" stroke="#666" stroke-width="1.2" stroke-linejoin="round"/>
<path d="M739.8,311.4V318.2M736.4,314.8H743.2" fill="none" stroke="#2f8f6a" stroke-width="1.8" />
<path d="M786.6,312.6V328.8M783.4,316L786.6,312.4L789.8,316M783.4,325.4L786.6,329L789.8,325.4" fill="none" stroke="#2a5c8f" stroke-width="1.7" stroke-linejoin="round"/>
<path d="M792,314.6H801M792,318.6H801M792,322.6H801M792,326.6H801" fill="none" stroke="#555" stroke-width="1.1" />
<path d="M806.0,319.2 L808.2,321.59999999999997 L810.4000000000001,319.2" fill="none" stroke="#2b2b2b" stroke-width="1.3" stroke-linecap="round" stroke-linejoin="round"/>
<path d="M845.6,327.4L857.4,313.2L856,328.6M848.6,322.6H857.6" fill="none" stroke="#2a5c8f" stroke-width="2.1" stroke-linejoin="round" stroke-linecap="round"/>
<circle cx="914.6" cy="313" r="1.4" fill="#2a5c8f" stroke="none" stroke-width="1"/>
<circle cx="914.6" cy="320.4" r="1.4" fill="#2a5c8f" stroke="none" stroke-width="1"/>
<circle cx="914.6" cy="327.8" r="1.4" fill="#2a5c8f" stroke="none" stroke-width="1"/>
<path d="M918.6,313H932M918.6,320.4H932M918.6,327.8H932" fill="none" stroke="#555" stroke-width="1.1" />
<path d="M922.5999999999999,356.2 L924.8,358.59999999999997 L927.0,356.2" fill="none" stroke="#2b2b2b" stroke-width="1.3" stroke-linecap="round" stroke-linejoin="round"/>
<rect x="506" y="386" width="143" height="198" fill="#000" opacity="0.10"/>
<rect x="504.5" y="384.5" width="142" height="197" fill="#f1f1f1" stroke="#b4b4b4" stroke-width="1" />
<path d="M537,555.4H646" fill="none" stroke="#d0d0d0" stroke-width="1" />
<path d="M511.4,495.6L515.2,499.4L522.8,491.7" fill="none" stroke="#2a2a2a" stroke-width="1.5" />
<rect x="506.4" y="483.2" width="138.5" height="20.1" fill="none" stroke="#ea373d" stroke-width="4.4" />
</svg>
<span class="t" style="left:434px;top:9px;font-size:13.2px;color:#f2f2f2;">PPT</span>
<span class="t" style="left:463px;top:9px;font-size:13.2px;color:#f2f2f2;">-</span>
<span class="t" style="left:474.5px;top:9px;font-size:13.2px;color:#f2f2f2;">PowerPoint</span>
<span class="t" style="left:16.5px;top:42.3px;font-size:12.2px;color:#f4f4f4;">文件</span>
<span class="t" style="left:122px;top:42.3px;font-size:12.2px;color:#f4f4f4;">插入</span>
<span class="t" style="left:172px;top:42.3px;font-size:12.2px;color:#f4f4f4;">打印</span>
<span class="t" style="left:222px;top:42.3px;font-size:12.2px;color:#f4f4f4;">切换</span>
<span class="t" style="left:272px;top:42.3px;font-size:12.2px;color:#f4f4f4;">动画</span>
<span class="t" style="left:322px;top:42.3px;font-size:12.2px;color:#f4f4f4;">视图</span>
<span class="t" style="left:372.5px;top:42.3px;font-size:12.2px;color:#f4f4f4;">幻灯片放映</span>
<span class="t" style="left:458.5px;top:42.3px;font-size:12.2px;color:#f4f4f4;">设计</span>
<span class="t" style="left:508.5px;top:42.3px;font-size:12.2px;color:#f4f4f4;">绘图</span>
<span class="t" style="left:558.5px;top:42.3px;font-size:12.2px;color:#f4f4f4;">审阅</span>
<span class="t" style="left:608.5px;top:42.3px;font-size:12.2px;color:#f4f4f4;">录制</span>
<span class="t" style="left:72px;top:42.3px;font-size:12.2px;color:#333;">开始</span>
<span class="t" style="left:658.5px;top:41.2px;font-size:13px;color:#f4f4f4;letter-spacing:-0.1px;">iSlide</span>
<span class="t" style="left:715.8px;top:41.2px;font-size:13px;color:#f4f4f4;letter-spacing:-0.12px;">LvyhTools(0429)</span>
<span class="t" style="left:835px;top:41.2px;font-size:13px;color:#f4f4f4;letter-spacing:-0.3px;">OneKey 10</span>
<span class="t" style="left:924px;top:41.2px;font-size:13px;color:#f4f4f4;">Acrobat</span>
<span class="t" style="left:997.5px;top:42.3px;font-size:12.2px;color:#fafafa;">形状格式</span>
<span class="t" style="left:1100.5px;top:42.3px;font-size:12.2px;color:#f4f4f4;">操作说明搜索</span>
<span class="t" style="left:21px;top:142px;font-size:12.2px;color:#3d3d3d;">剪贴板</span>
<span class="t" style="left:141.5px;top:142px;font-size:12.2px;color:#3d3d3d;">幻灯片</span>
<span class="t" style="left:344.5px;top:142px;font-size:12.2px;color:#3d3d3d;">字体</span>
<span class="t" style="left:587px;top:142px;font-size:12.2px;color:#3d3d3d;">段落</span>
<span class="t" style="left:858.5px;top:142px;font-size:12.2px;color:#3d3d3d;">绘图</span>
<span class="t" style="left:1078px;top:142px;font-size:12.2px;color:#3d3d3d;">编辑</span>
<span class="t" style="left:1142px;top:142px;font-size:12.2px;color:#3d3d3d;">加载项</span>
<span class="t" style="left:16.6px;top:105px;font-size:12.2px;color:#2a2a2a;">粘贴</span>
<span class="t" style="left:116.7px;top:105px;font-size:12.2px;color:#2a2a2a;">新建</span>
<span class="t" style="left:104.6px;top:120px;font-size:12.2px;color:#2a2a2a;">幻灯片</span>
<span class="t" style="left:175.7px;top:72px;font-size:12.2px;color:#2a2a2a;">版式</span>
<span class="t" style="left:175.7px;top:95.3px;font-size:12.2px;color:#2a2a2a;">重置</span>
<span class="t" style="left:175.7px;top:118.6px;font-size:12.2px;color:#2a2a2a;">节</span>
<span class="t" style="left:234.6px;top:79.6px;font-size:12.3px;color:#2a2a2a;">等线 (正文)</span>
<span class="t" style="left:378px;top:79.8px;font-size:12.8px;color:#2a2a2a;">18</span>
<span class="t" style="left:428.8px;top:76.6px;font-size:16.2px;color:#2e2e2e;">A</span>
<span class="t" style="left:452.6px;top:79px;font-size:13.6px;color:#2e2e2e;">A</span>
<span class="t" style="left:481px;top:76.6px;font-size:11.5px;color:#2e2e2e;">A</span>
<span class="t" style="left:239.8px;top:108.4px;font-size:14.6px;color:#1e1e1e;font-weight:bold;-webkit-text-stroke:0.5px #1e1e1e;transform:scaleX(0.86);transform-origin:0 0;">B</span>
<span class="t" style="left:262.8px;top:108.2px;font-size:14.8px;color:#1e1e1e;font-weight:bold;-webkit-text-stroke:0.4px #1e1e1e;font-style:italic;font-family:'Liberation Serif',serif;">I</span>
<span class="t" style="left:284.2px;top:108.8px;font-size:13.6px;color:#1e1e1e;font-weight:bold;-webkit-text-stroke:0.3px #1e1e1e;transform:scaleX(0.92);transform-origin:0 0;">U</span>
<span class="t" style="left:307.4px;top:108.4px;font-size:14.6px;color:#1e1e1e;font-weight:bold;transform:scaleX(0.88);transform-origin:0 0;-webkit-text-stroke:0.5px #1e1e1e;text-shadow:0.9px 0.9px 1.2px #666;">S</span>
<span class="t" style="left:326.2px;top:110.6px;font-size:10.6px;color:#2e2e2e;">abc</span>
<span class="t" style="left:351px;top:108.4px;font-size:10.8px;color:#1e1e1e;letter-spacing:-0.6px;">AV</span>
<span class="t" style="left:385.6px;top:108.6px;font-size:14.2px;color:#2e2e2e;letter-spacing:-0.4px;">Aa</span>
<span class="t" style="left:426.4px;top:106.2px;font-size:8.4px;color:#2e2e2e;letter-spacing:-0.3px;">ab</span>
<span class="t" style="left:465.4px;top:108px;font-size:15.2px;color:#2e2e2e;">A</span>
<span class="t" style="left:553.2px;top:76.8px;font-size:5.6px;color:#3b6ea8;font-weight:bold;">1</span>
<span class="t" style="left:553.2px;top:81.8px;font-size:5.6px;color:#3b6ea8;font-weight:bold;">2</span>
<span class="t" style="left:553.2px;top:86.8px;font-size:5.6px;color:#3b6ea8;font-weight:bold;">3</span>
<span class="t" style="left:680.2px;top:69.2px;font-size:10.4px;color:#3565a8;font-weight:bold;">A</span>
<span class="t" style="left:746px;top:73.6px;font-size:6.6px;color:#333;font-weight:bold;">A</span>
<span class="t" style="left:771.8px;top:73.6px;font-size:6.6px;color:#333;font-weight:bold;">A</span>
<span class="t" style="left:868.4px;top:105px;font-size:12.2px;color:#2a2a2a;">排列</span>
<span class="t" style="left:903.8px;top:105px;font-size:12.2px;color:#2a2a2a;">快速样式</span>
<span class="t" style="left:975.4px;top:71.8px;font-size:12px;color:#2a2a2a;">形状填充</span>
<span class="t" style="left:975.4px;top:94.2px;font-size:12px;color:#2a2a2a;">形状轮廓</span>
<span class="t" style="left:975.4px;top:116px;font-size:12px;color:#2a2a2a;">形状效果</span>
<span class="t" style="left:1078px;top:71.8px;font-size:12.2px;color:#2a2a2a;">查找</span>
<span class="t" style="left:1060px;top:91.6px;font-size:9.6px;color:#2e2e2e;letter-spacing:-0.2px;">a<span style="color:#7a4a8c">b</span></span>
<span class="t" style="left:1064.6px;top:98.2px;font-size:9.6px;color:#2e2e2e;letter-spacing:-0.2px;">a<span style="color:#3b6ea8">c</span></span>
<span class="t" style="left:1078px;top:94.2px;font-size:12.2px;color:#2a2a2a;">替换</span>
<span class="t" style="left:1078px;top:116px;font-size:12.2px;color:#2a2a2a;">选择</span>
<span class="t" style="left:1154.2px;top:105px;font-size:12.2px;color:#2a2a2a;">加</span>
<span class="t" style="left:1148.6px;top:120px;font-size:12.2px;color:#2a2a2a;">载项</span>
<span class="t" style="left:43.2px;top:167.8px;font-size:11.4px;color:#5a5a5a;-webkit-text-stroke:0;">文</span>
<span class="t" style="left:640.4px;top:168px;font-size:6.2px;color:#fff;font-weight:bold;">A</span>
<span class="t" style="left:676.4px;top:168.2px;font-size:6.2px;color:#fff;font-weight:bold;">A</span>
<span class="t" style="left:855.4px;top:166.4px;font-size:11.4px;color:#f4f4f4;font-style:italic;letter-spacing:-0.7px;transform:scaleY(1.18);transform-origin:0 0;">abc</span>
<span class="t" style="left:961px;top:165.6px;font-size:13.6px;color:#f4f4f4;font-weight:bold;">A</span>
<span class="t" style="left:13px;top:205.6px;font-size:15.6px;color:#f0f0f0;">1</span>
<span class="t" style="left:1007.4px;top:201.8px;font-size:21.3px;color:#ececec;">设置形状格式</span>
<span class="t" style="left:1009.6px;top:238.4px;font-size:12.2px;color:#ffffff;font-weight:bold;">形状选项</span>
<span class="t" style="left:1075.8px;top:238.4px;font-size:12.2px;color:#f2f2f2;">文本选项</span>
<span class="t" style="left:1027.8px;top:318.6px;font-size:12.2px;color:#ffffff;font-weight:bold;">线条</span>
<span class="t" style="left:1045.8px;top:348.8px;font-size:12.2px;color:#f2f2f2;">无线条(<u>N</u>)</span>
<span class="t" style="left:1045.8px;top:372.8px;font-size:12.2px;color:#f2f2f2;">实线(<u>S</u>)</span>
<span class="t" style="left:1045.8px;top:396.8px;font-size:12.2px;color:#f2f2f2;">渐变线(<u>G</u>)</span>
<span class="t" style="left:1037px;top:433.6px;font-size:12.2px;color:#f2f2f2;">颜色(<u>C</u>)</span>
<span class="t" style="left:1037px;top:464.6px;font-size:12.2px;color:#f2f2f2;">透明度(<u>T</u>)</span>
<span class="t" style="left:1037px;top:493.2px;font-size:12.2px;color:#f2f2f2;">宽度(<u>W</u>)</span>
<span class="t" style="left:1037px;top:524.4px;font-size:12.2px;color:#f2f2f2;">复合类型(<u>C</u>)</span>
<span class="t" style="left:1037px;top:557.2px;font-size:12.2px;color:#f2f2f2;">短划线类型(<u>D</u>)</span>
<span class="t" style="left:1037px;top:586.4px;font-size:12.2px;color:#f2f2f2;">线端类型(<u>A</u>)</span>
<span class="t" style="left:1153.6px;top:464.6px;font-size:12.8px;color:#333;">0%</span>
<span class="t" style="left:1153.8px;top:493.2px;font-size:12.6px;color:#333;">1 磅</span>
<span class="t" style="left:509.6px;top:314.6px;font-size:12.3px;color:#262626;">等线 (正文)</span>
<span class="t" style="left:594px;top:314.8px;font-size:12.8px;color:#262626;">18</span>
<span class="t" style="left:647.2px;top:312.2px;font-size:16.6px;color:#2a2a2a;">A</span>
<span class="t" style="left:668.8px;top:314.6px;font-size:13.8px;color:#2a2a2a;">A</span>
<span class="t" style="left:513.6px;top:343.2px;font-size:14.6px;color:#1a1a1a;font-weight:bold;-webkit-text-stroke:0.5px #1e1e1e;transform:scaleX(0.88);transform-origin:0 0;">B</span>
<span class="t" style="left:535.6px;top:343px;font-size:14.8px;color:#1a1a1a;font-weight:bold;-webkit-text-stroke:0.4px #1e1e1e;font-style:italic;font-family:'Liberation Serif',serif;">I</span>
<span class="t" style="left:556px;top:343.6px;font-size:13.6px;color:#1a1a1a;font-weight:bold;-webkit-text-stroke:0.3px #1e1e1e;transform:scaleX(0.94);transform-origin:0 0;">U</span>
<span class="t" style="left:638.6px;top:341px;font-size:8.4px;color:#2e2e2e;letter-spacing:-0.3px;">ab</span>
<span class="t" style="left:676.4px;top:342.8px;font-size:15.2px;color:#2e2e2e;">A</span>
<span class="t" style="left:734.2px;top:335.2px;font-size:12.2px;color:#262626;">新建</span>
<span class="t" style="left:734.2px;top:350.4px;font-size:12.2px;color:#262626;">批注</span>
<span class="t" style="left:780.2px;top:335.2px;font-size:12.2px;color:#262626;">行距</span>
<span class="t" style="left:841.2px;top:335.2px;font-size:12.2px;color:#262626;">设置</span>
<span class="t" style="left:816.8px;top:350.4px;font-size:12.2px;color:#262626;">文字效果格式</span>
<span class="t" style="left:899.2px;top:337px;font-size:12.2px;color:#262626;">项目符号</span>
<span class="t" style="left:536.6px;top:392.4px;font-size:12.2px;color:#262626;">添加顶点(<u>A</u>)</span>
<span class="t" style="left:536.6px;top:415.8px;font-size:12.2px;color:#262626;">删除顶点(<u>L</u>)</span>
<span class="t" style="left:536.6px;top:439.8px;font-size:12.2px;color:#b6b6b6;">开放路径(<u>N</u>)</span>
<span class="t" style="left:536.6px;top:463.6px;font-size:12.2px;color:#262626;">关闭路径(<u>L</u>)</span>
<span class="t" style="left:536.6px;top:489.2px;font-size:12.2px;color:#262626;">平滑顶点(<u>S</u>)</span>
<span class="t" style="left:536.6px;top:514px;font-size:12.2px;color:#262626;">直线点(<u>R</u>)</span>
<span class="t" style="left:536.6px;top:537.6px;font-size:12.2px;color:#262626;">角部顶点(<u>C</u>)</span>
<span class="t" style="left:536.6px;top:563.6px;font-size:12.2px;color:#262626;">退出编辑顶点(<u>E</u>)</span>
</body></html>
